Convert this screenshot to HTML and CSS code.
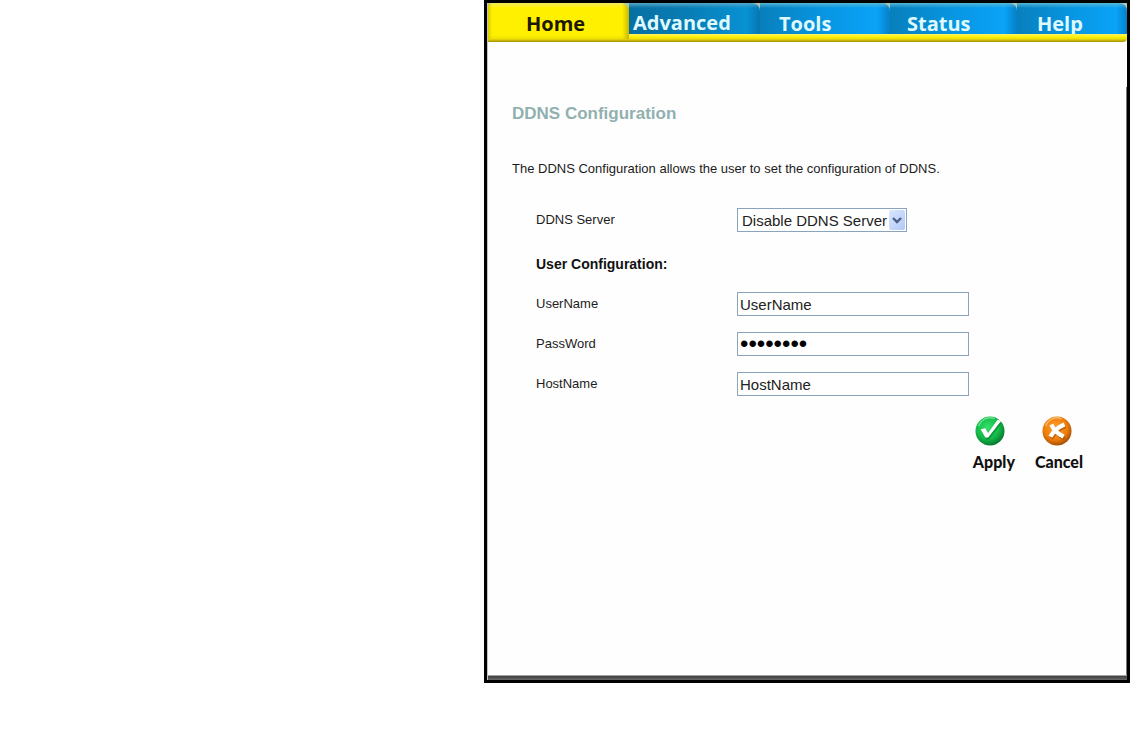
FILE: index.html
```html
<!DOCTYPE html>
<html lang="en">
<head>
<meta charset="utf-8">
<title>DDNS Configuration</title>
<link rel="stylesheet" href="styles.css">
</head>
<body>
<div class="panel">
  <nav class="tabs">
    <a class="tab tab-home" href="#home">Home</a>
    <a class="tab tab-advanced" href="#advanced">Advanced</a>
    <a class="tab tab-tools" href="#tools">Tools</a>
    <a class="tab tab-status" href="#status">Status</a>
    <a class="tab tab-help" href="#help">Help</a>
  </nav>
  <main class="content">
    <h1 class="title">DDNS Configuration</h1>
    <p class="intro">The DDNS Configuration allows the user to set the configuration of DDNS.</p>
    <form class="form">
      <div class="row">
        <label class="label" for="server">DDNS Server</label>
        <div class="select-box">
          <select class="select" id="server"><option>Disable DDNS Server</option></select>
          <svg class="arrow" viewBox="0 0 16 20" aria-hidden="true">
            <defs><linearGradient id="arrowFill" x1="0" y1="0" x2="1" y2="1"><stop offset="0" stop-color="#dbe6ff"/><stop offset="1" stop-color="#b0c8f6"/></linearGradient></defs>
            <rect width="16" height="20" rx="2" fill="url(#arrowFill)"/>
            <path d="M4 8l4 4 4-4" fill="none" stroke="#4a6186" stroke-width="2.4"/>
          </svg>
        </div>
      </div>
      <h2 class="section">User Configuration:</h2>
      <div class="row">
        <label class="label" for="user">UserName</label>
        <input class="field" id="user" type="text" value="UserName">
      </div>
      <div class="row">
        <label class="label" for="pass">PassWord</label>
        <input class="field field-password" id="pass" type="password" value="password">
      </div>
      <div class="row">
        <label class="label" for="host">HostName</label>
        <input class="field" id="host" type="text" value="HostName">
      </div>
      <div class="actions">
        <button class="action action-apply" type="button">
          <svg class="icon" viewBox="0 0 32 32" aria-hidden="true">
            <defs><radialGradient id="green" cx=".42" cy=".38" r=".62"><stop offset="0" stop-color="#35e26a"/><stop offset=".65" stop-color="#12b848"/><stop offset="1" stop-color="#087a30"/></radialGradient></defs>
            <circle cx="16" cy="16" r="15.500" fill="url(#green)"/>
            <path d="M4 11A12.500 12.500 0 0 1 21 3" fill="none" stroke="#8ff0a8" stroke-width="1.500" opacity=".7"/>
            <path d="M7 16l4-2 4 5L25 6l3 2L15 25h-3Z" fill="#0a7a32" opacity=".6"/>
            <path d="M6 14l5-1 3 5L24 4l4 1L14 23h-3Z" fill="#fff"/>
          </svg>
          <span>Apply</span>
        </button>
        <button class="action action-cancel" type="button">
          <svg class="icon" viewBox="0 0 32 32" aria-hidden="true">
            <defs><radialGradient id="orange" cx=".45" cy=".4" r=".62"><stop offset="0" stop-color="#ffa02a"/><stop offset=".65" stop-color="#ee7d0c"/><stop offset="1" stop-color="#a04a04"/></radialGradient></defs>
            <circle cx="16" cy="16" r="15.500" fill="url(#orange)"/>
            <path d="M4 11A12.500 12.500 0 0 1 21 3" fill="none" stroke="#ffd08a" stroke-width="1.500" opacity=".7"/>
            <path d="M11 11q3 8 13 13M25 11q-10 4-15 13" fill="none" stroke="#9a4a08" stroke-width="4" opacity=".6"/>
            <path d="M10 9q3 8 13 13M24 9q-10 4-15 13" fill="none" stroke="#fff" stroke-width="4.500"/>
          </svg>
          <span>Cancel</span>
        </button>
      </div>
    </form>
  </main>
</div>
</body>
</html>
```
FILE: styles.css
```css
* { box-sizing: border-box; }

body {
  margin: 0;
  background: #fff;
  color: #1c1c1c;
  font: 13px/16px "Liberation Sans", Arial, sans-serif;
}

.panel {
  display: flex;
  flex-direction: column;
  min-height: 683px;
  margin-left: calc(100% * 484 / 1130);
  border: 3px solid #000;
  background:
    linear-gradient(#c4c4c4, #c4c4c4) left / 1px 100% no-repeat,
    linear-gradient(#d0d0d4, #444 30%, #666) bottom / 100% 5px no-repeat,
    linear-gradient(#777, #777) right 100% / 1px calc(100% - 84px) no-repeat,
    #fefefe;
}

.tabs {
  display: grid;
  grid-template-columns: 141fr 131fr 130fr 127fr 110fr;
  height: 39px;
  margin-left: 1px;
  border-radius: 0 0 4px 0;
  background: linear-gradient(#b4c4b4 0 31px, #fff36a 31px, #fff000 34px, #eadb10 36px, #a48f00 39px);
}

.tab {
  height: 31px;
  padding-top: 11px;
  overflow: hidden;
  border-radius: 0 8px 0 0;
  background: linear-gradient(#54b6d6, transparent 5px), linear-gradient(90deg, #087fbc, #0796e2 50%, #0aa3f8 90%, #0580c8);
  color: #dffaff;
  font: 700 20px/20px "Open Sans", "Noto Sans", sans-serif;
  text-decoration: none;
}

.tab-home {
  height: 36px;
  padding-left: 38px;
  border-radius: 4px 8px 0 0;
  background: linear-gradient(90deg, #d8c800, transparent 4px, transparent 134px, #c8b800), linear-gradient(#f4e860, #fff000 5px, #fff000 32px, #eee000);
  color: #1c1800;
}

.tab-advanced {
  padding: 9px 0 0 4px;
  background: linear-gradient(#54a6c6, transparent 5px), linear-gradient(90deg, #076fa0, #087fb8 50%, #0792d4 90%, #0775b0);
  line-height: 22px;
}

.tab-tools { padding-left: 19px; }
.tab-status { padding-left: 17px; }
.tab-help { padding-left: 20px; }

.content { padding: 60px 40px 40px 25px; }

.title {
  margin: 0;
  color: #91b0b0;
  font-size: 17px;
  line-height: 24px;
}

.intro { margin: 35px 0 0; }

.form {
  display: grid;
  gap: 16px;
  padding: 31px 0 0 24px;
}

.row {
  display: grid;
  grid-template-columns: 201px minmax(0, 232px);
  align-items: center;
}

.section {
  margin: 6px 0 2px;
  color: #111;
  font-size: 14px;
  line-height: 20px;
}

.field,
.select {
  width: 100%;
  height: 24px;
  margin: 0;
  padding: 0 2px;
  border: 1px solid #8ba4bd;
  border-radius: 0;
  background: #fff;
  color: #222;
  font: 15px "Liberation Sans", Arial, sans-serif;
}

.field-password {
  color: #000;
  font-size: 24px;
}

.select-box {
  display: grid;
  grid-template-columns: 1fr 18px;
  align-items: center;
  width: 170px;
}

.select {
  grid-area: 1 / 1 / 2 / 3;
  padding: 0 4px;
  appearance: none;
}

.arrow {
  grid-area: 1 / 2;
  width: 16px;
  height: 20px;
  pointer-events: none;
}

.actions {
  display: flex;
  justify-content: flex-end;
  gap: 20px;
  padding-right: 4px;
}

.action {
  display: flex;
  flex-direction: column;
  gap: 6px;
  padding: 4px 0 0;
  border: 0;
  background: none;
  color: #111;
  font: 900 16px/20px Lato, "Open Sans", sans-serif;
}

.icon {
  width: 30px;
  height: 30px;
}

.action-apply .icon { margin-left: 2px; }
.action-cancel .icon { margin-left: 7px; }
```
